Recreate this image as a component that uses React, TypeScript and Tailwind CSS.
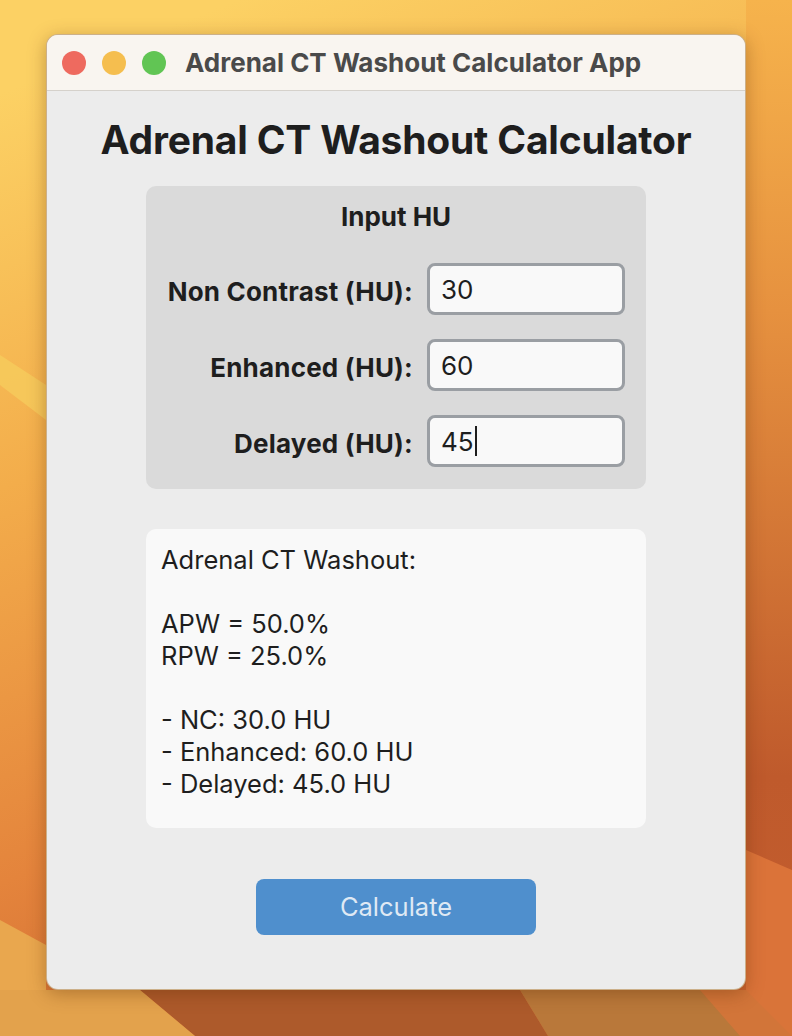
import React from "react";

const inputs = [
  { label: "Non Contrast (HU):", value: "30" },
  { label: "Enhanced (HU):", value: "60" },
  { label: "Delayed (HU):", value: "45", caret: true },
];

const result = `Adrenal CT Washout:

APW = 50.0%
RPW = 25.0%

- NC: 30.0 HU
- Enhanced: 60.0 HU
- Delayed: 45.0 HU`;

function Wallpaper() {
  return (
    <svg
      className="absolute inset-0 h-full w-full"
      viewBox="0 0 792 1036"
      preserveAspectRatio="none"
    >
      <defs>
        <linearGradient id="base" x1="0.3" y1="0" x2="0.6" y2="1">
          <stop offset="0" stopColor="#fcd164" />
          <stop offset="0.35" stopColor="#f3ad4b" />
          <stop offset="0.7" stopColor="#e4843c" />
          <stop offset="1" stopColor="#c9632f" />
        </linearGradient>
        <linearGradient id="right" x1="0" y1="0" x2="0" y2="1">
          <stop offset="0" stopColor="#f6b34c" />
          <stop offset="0.3" stopColor="#e6913f" />
          <stop offset="0.75" stopColor="#bf5a2c" />
          <stop offset="1" stopColor="#c45e2f" />
        </linearGradient>
      </defs>
      <rect width="792" height="1036" fill="url(#base)" />
      <rect x="746" width="46" height="1036" fill="url(#right)" />
      {/* light band on the left */}
      <path d="M0 355 L46 385 L46 420 L0 385 Z" fill="#f6cf5e" opacity="0.7" />
      <path d="M0 920 L46 945 L46 1036 L0 1036 Z" fill="#e9a74e" />
      {/* right lower band */}
      <path d="M746 850 L792 870 L792 1036 L746 1036 Z" fill="#db7339" />
      {/* bottom strip */}
      <path d="M140 990 L520 990 L548 1036 L195 1036 Z" fill="#ad5a2b" />
      <path d="M520 990 L746 990 L792 1036 L548 1036 Z" fill="#b9783a" />
      <path d="M700 990 L792 990 L792 1036 L740 1036 Z" fill="#d8743a" opacity="0.8" />
      <path d="M0 990 L140 990 L195 1036 L0 1036 Z" fill="#e3a24c" />
    </svg>
  );
}

export default function App() {
  return (
    <div className="relative h-[1036px] w-[792px] overflow-hidden font-['Inter',sans-serif]">
      <Wallpaper />
      <div className="relative pt-[34px]">
        <div className="mx-auto flex h-[956px] w-[700px] flex-col overflow-hidden rounded-[12px] border border-[#b8894a]/60 bg-[#ececec] shadow-[0_4px_18px_rgba(90,40,0,0.35)]">
          {/* title bar */}
          <div className="flex h-[56px] items-center border-b border-[#d5d1cb] bg-[#f9f5f0] pl-[15px]">
            <div className="flex gap-[16px]">
              <span className="h-[24px] w-[24px] rounded-full bg-[#ee6a5f]" />
              <span className="h-[24px] w-[24px] rounded-full bg-[#f5be4f]" />
              <span className="h-[24px] w-[24px] rounded-full bg-[#61c554]" />
            </div>
            <div className="ml-[19px] text-[26px] font-bold leading-[32px] text-[#4a4a4a]">
              Adrenal CT Washout Calculator App
            </div>
          </div>

          {/* content */}
          <div className="flex flex-col items-center pt-[29px]">
            <h1 className="text-[39px] font-bold leading-[40px] tracking-[-0.2px] text-[#1e1e1e]">
              Adrenal CT Washout Calculator
            </h1>

            <div className="mt-[26px] w-[500px] rounded-[10px] bg-[#dadada] pb-[22px] pt-[19px]">
              <div className="text-center text-[26px] font-bold leading-[24px] text-[#1e1e1e]">
                Input HU
              </div>
              <div className="mt-[34px] flex flex-col gap-[24px] pr-[21px]">
                {inputs.map((row) => (
                  <div key={row.label} className="flex items-center">
                    <div className="flex-1 pr-[14px] pt-[5px] text-right text-[26px] font-bold tracking-[0.2px] text-[#1e1e1e]">
                      {row.label}
                    </div>
                    <div className="flex h-[52px] w-[198px] items-center rounded-[8px] border-[3px] border-[#9a9ea3] bg-[#f9f9f9] pl-[11px] text-[26px] text-[#1e1e1e]">
                      {row.value}
                      {row.caret && (
                        <span className="ml-px inline-block h-[30px] w-[2px] bg-[#1e1e1e]" />
                      )}
                    </div>
                  </div>
                ))}
              </div>
            </div>

            <div className="mt-[40px] h-[299px] w-[500px] whitespace-pre rounded-[10px] bg-[#f9f9f9] pl-[15px] pt-[15px] text-[25.5px] leading-[32px] text-[#1e1e1e]">
              {result}
            </div>

            <button className="mt-[51px] h-[56px] w-[280px] rounded-[8px] bg-[#4f8fcd] text-[25.5px] text-[#dfe9f4]">
              Calculate
            </button>
          </div>
        </div>
      </div>
    </div>
  );
}
